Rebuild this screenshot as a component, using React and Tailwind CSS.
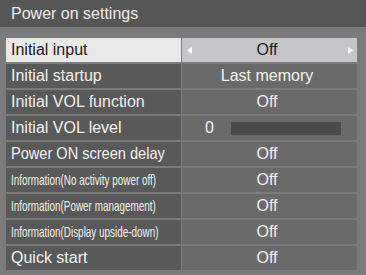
export default function App() {
  const rows = [
    { label: "Initial input", value: "Off", selected: true },
    { label: "Initial startup", value: "Last memory" },
    { label: "Initial VOL function", value: "Off" },
    { label: "Initial VOL level", value: "0", bar: true },
    { label: "Power ON screen delay", value: "Off", narrow: true },
    { label: "Information(No activity power off)", value: "Off", small: true },
    { label: "Information(Power management)", value: "Off", small: true },
    { label: "Information(Display upside-down)", value: "Off", small: true },
    { label: "Quick start", value: "Off" },
  ];
  return (
    <div
      className="w-[366px] h-[275px] bg-[#7b7b7b] overflow-hidden flex flex-col"
      style={{ fontFamily: '"Liberation Sans", Arial, sans-serif' }}
    >
      <div className="h-[27px] bg-[#565656] flex items-center pl-[11px] text-[16px] text-[#ececec]">
        Power on settings
      </div>
      <div className="flex flex-col gap-[2px] pt-[11px] pl-[6px] w-[357px]">
        {rows.map((r, i) => (
          <div key={i} className="flex h-[24px] gap-[1px]">
            <div
              className={
                "w-[175px] flex items-center pl-[5px] overflow-hidden whitespace-nowrap " +
                (r.selected ? "bg-[#e9e9e9] text-[#1a1a1a]" : "bg-[#595959] text-[#f2f2f2]")
              }
            >
              {r.small ? (
                <span className="inline-block text-[15px] origin-left scale-x-[0.66]">{r.label}</span>
              ) : r.narrow ? (
                <span className="inline-block text-[16px] origin-left scale-x-[0.91]">{r.label}</span>
              ) : (
                <span className="text-[16px]">{r.label}</span>
              )}
            </div>
            <div
              className={
                "flex-1 relative flex items-center text-[16px] " +
                (r.selected ? "bg-[#c6c6ca] text-[#1a1a1a]" : "bg-[#6a6a6a] text-[#f2f2f2]")
              }
            >
              {r.bar ? (
                <div className="flex items-center w-full pl-[23px] gap-[17px]">
                  <span>{r.value}</span>
                  <div className="w-[110px] h-[13px] bg-[#4b4b4b] mt-[1px]" />
                </div>
              ) : (
                <div className="w-full text-center pr-[5px]">{r.value}</div>
              )}
              {r.selected && (
                <>
                  <svg className="absolute left-[5px] top-[9px]" width="5" height="7" viewBox="0 0 5 7">
                    <polygon points="5,0 5,7 0,3.5" fill="#ffffff" />
                  </svg>
                  <svg className="absolute right-[4px] top-[9px]" width="5" height="7" viewBox="0 0 5 7">
                    <polygon points="0,0 0,7 5,3.5" fill="#ffffff" />
                  </svg>
                </>
              )}
            </div>
          </div>
        ))}
      </div>
    </div>
  );
}
